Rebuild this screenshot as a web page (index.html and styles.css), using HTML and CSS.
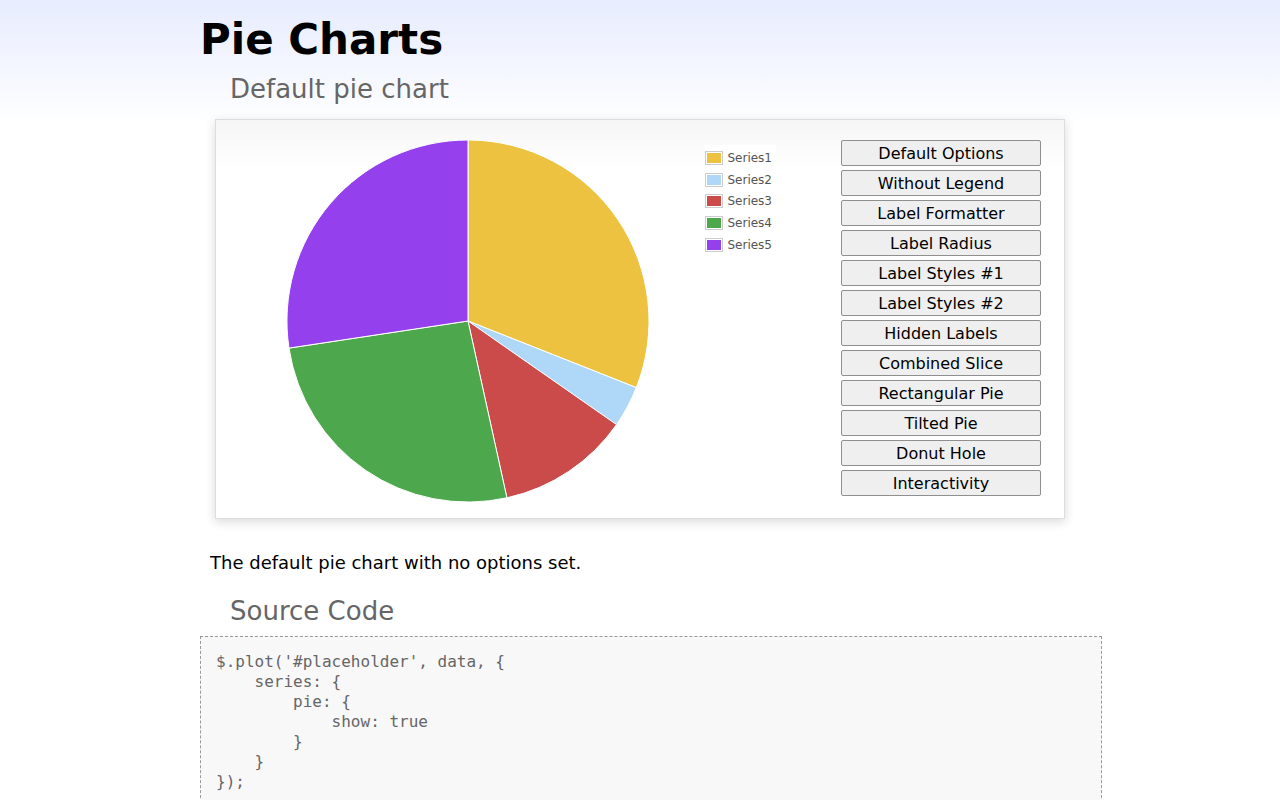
FILE: index.html
```html
<!DOCTYPE html>
<html>
<head>
<meta charset="utf-8">
<title>Flot Examples: Pie Charts</title>
<link rel="stylesheet" href="styles.css">
</head>
<body>
<div class="header">
  <h2 class="title">Pie Charts</h2>
</div>
<div class="content">
  <h3 class="subtitle">Default pie chart</h3>
  <div class="demo-container">
    <div class="placeholder">
      <svg class="pie" width="550" height="364" viewBox="231 140 550 364">
        <g stroke="#fff" stroke-width="1" stroke-linejoin="round">
          <path fill="#edc240" d="M468 321 L468 140 A181 181 0 0 1 636.3 387.6 Z"/>
          <path fill="#afd8f8" d="M468 321 L636.3 387.6 A181 181 0 0 1 616.5 424.6 Z"/>
          <path fill="#cb4b4b" d="M468 321 L616.5 424.6 A181 181 0 0 1 506.9 497.8 Z"/>
          <path fill="#4da74d" d="M468 321 L506.9 497.8 A181 181 0 0 1 289.0 348.1 Z"/>
          <path fill="#9440ed" d="M468 321 L289.0 348.1 A181 181 0 0 1 468 140 Z"/>
        </g>
      </svg>
      <div class="legend">
        <div class="legend-row"><span class="swatch"><span class="swatch-color c1"></span></span><span class="legend-label">Series1</span></div>
        <div class="legend-row"><span class="swatch"><span class="swatch-color c2"></span></span><span class="legend-label">Series2</span></div>
        <div class="legend-row"><span class="swatch"><span class="swatch-color c3"></span></span><span class="legend-label">Series3</span></div>
        <div class="legend-row"><span class="swatch"><span class="swatch-color c4"></span></span><span class="legend-label">Series4</span></div>
        <div class="legend-row"><span class="swatch"><span class="swatch-color c5"></span></span><span class="legend-label">Series5</span></div>
      </div>
    </div>
    <div class="menu">
      <button class="menu-btn">Default Options</button>
      <button class="menu-btn">Without Legend</button>
      <button class="menu-btn">Label Formatter</button>
      <button class="menu-btn">Label Radius</button>
      <button class="menu-btn">Label Styles #1</button>
      <button class="menu-btn">Label Styles #2</button>
      <button class="menu-btn">Hidden Labels</button>
      <button class="menu-btn">Combined Slice</button>
      <button class="menu-btn">Rectangular Pie</button>
      <button class="menu-btn">Tilted Pie</button>
      <button class="menu-btn">Donut Hole</button>
      <button class="menu-btn">Interactivity</button>
    </div>
  </div>
  <p class="description">The default pie chart with no options set.</p>
  <h3 class="subtitle code-title">Source Code</h3>
  <pre class="code">$.plot('#placeholder', data, {
    series: {
        pie: {
            show: true
        }
    }
});</pre>
</div>
</body>
</html>
```
FILE: styles.css
```css
* {
  margin: 0;
  padding: 0;
  box-sizing: content-box;
}

html, body {
  background: #fff;
}

body {
  background: linear-gradient(#e7ecfe 0, #ffffff 125px) no-repeat;
  font: 18px/1.5em "DejaVu Sans", Verdana, sans-serif;
  color: #000;
  min-height: 800px;
}

.header {
  width: 900px;
  margin: 0 auto;
}

.title {
  margin: 15px 0 0 10px;
  font: bold 42px "DejaVu Sans", sans-serif;
  line-height: 49px;
}

.content {
  width: 880px;
  margin: 0 auto;
  padding: 10px;
}

.subtitle {
  margin-left: 30px;
  font: normal 26px "DejaVu Sans", sans-serif;
  line-height: 30px;
  color: #666;
}

.demo-container {
  box-sizing: border-box;
  width: 850px;
  height: 400px;
  padding: 20px 15px 15px 15px;
  margin: 15px auto 30px auto;
  border: 1px solid #ddd;
  background: linear-gradient(#f6f6f6 0, #fff 50px);
  box-shadow: 0 3px 10px rgba(0, 0, 0, 0.15);
  display: flex;
  align-items: flex-start;
}

.placeholder {
  position: relative;
  width: 550px;
  height: 364px;
  font-size: 14px;
}

.pie {
  display: block;
}

.legend {
  position: absolute;
  top: 5px;
  right: 5px;
  background: rgba(255, 255, 255, 0.85);
  padding: 2px 4px 0 0;
  font-size: 12px;
  line-height: 14px;
  color: #545454;
}

.legend-row {
  display: flex;
  align-items: center;
  height: 21.7px;
}

.swatch {
  display: block;
  border: 1px solid #ccc;
  padding: 1px;
  margin-right: 4px;
}

.swatch-color {
  display: block;
  width: 14px;
  height: 10px;
}

.c1 { background: #edc240; }
.c2 { background: #afd8f8; }
.c3 { background: #cb4b4b; }
.c4 { background: #4da74d; }
.c5 { background: #9440ed; }

.legend-label {
  font-family: "DejaVu Sans", sans-serif;
}

.menu {
  margin-left: 60px;
  display: flex;
  flex-direction: column;
  gap: 4px;
}

.menu-btn {
  display: block;
  box-sizing: border-box;
  width: 200px;
  height: 26px;
  font: 16px/20px "DejaVu Sans", sans-serif;
  color: #000;
  background: #efefef;
  border: 1px solid #8f8f8f;
  border-radius: 2px;
  padding: 2px 0 0 0;
  text-align: center;
}

.description {
  margin: 0 10px;
}

.code-title {
  margin-top: 20px;
}

.code {
  margin-top: 10px;
  width: 870px;
  padding: 15px;
  border: 1px dashed #999;
  background: #f8f8f8;
  font: 16px/20px "DejaVu Sans Mono", monospace;
  color: #666;
}
```
